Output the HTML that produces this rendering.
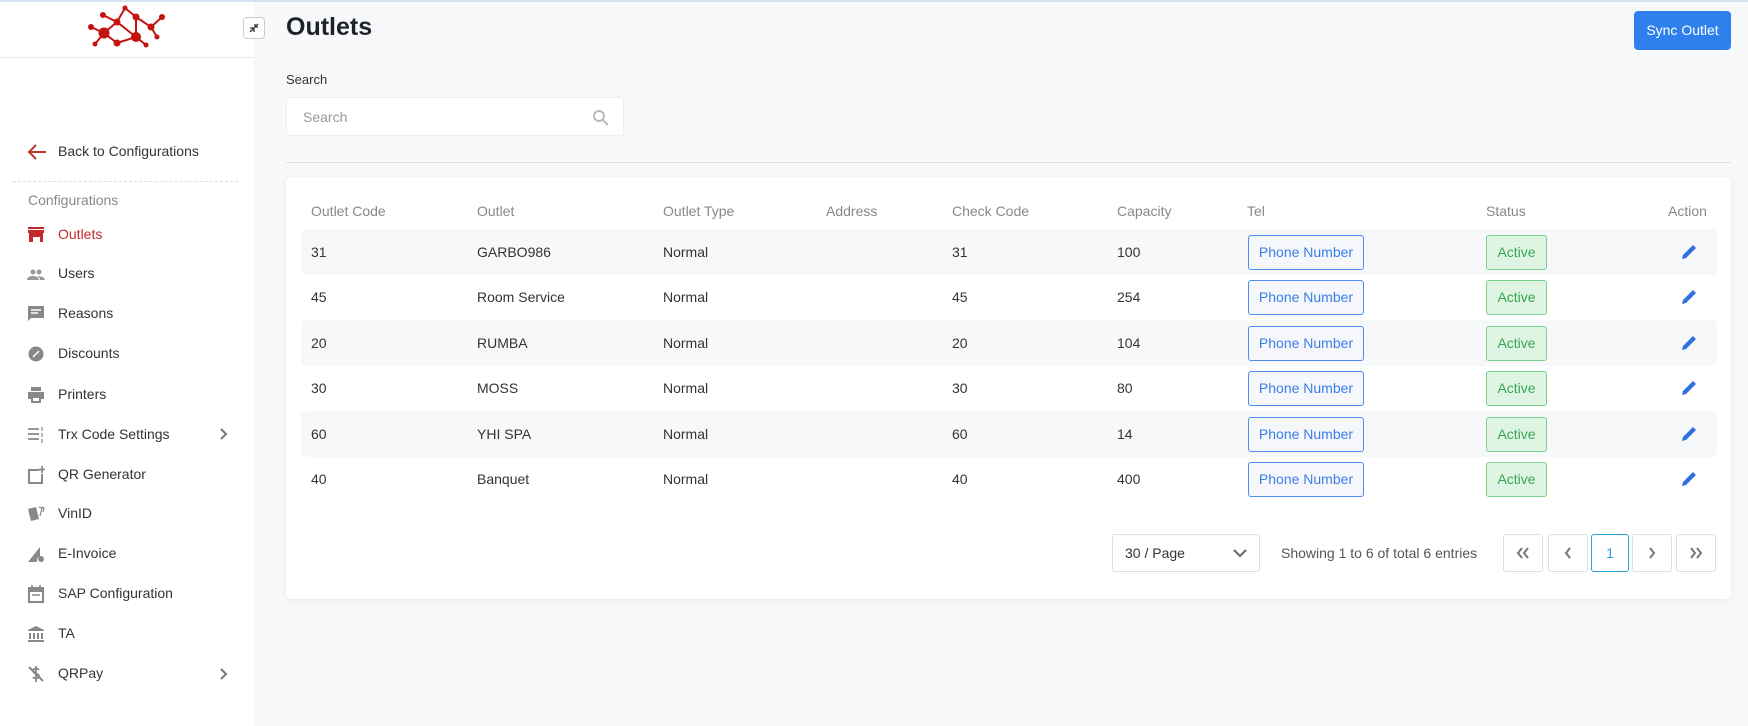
<!DOCTYPE html>
<html><head><meta charset="utf-8"><style>
*{box-sizing:border-box;margin:0;padding:0}
body{width:1748px;height:726px;overflow:hidden;background:#f7f8fa;font-family:"Liberation Sans",sans-serif;color:#333;position:relative}
.topline{position:absolute;left:0;top:0;width:1748px;height:2px;background:#d6e0ee;z-index:5}
.sb{position:absolute;left:0;top:0;width:254px;height:726px;background:#fff}
.sbh{position:absolute;left:0;top:0;width:254px;height:58px;border-bottom:1px solid #e6e8eb}
.col{position:absolute;left:243px;top:17px;width:22px;height:22px;border:1px solid #ccc;border-radius:4px;background:#fff}
.back{position:absolute;left:58px;top:143px;font-size:14px;color:#333}
.dash{position:absolute;left:13px;top:181px;width:225px;border-top:1px dashed #ddd}
.cfg{position:absolute;left:28px;top:192px;font-size:14px;color:#888}
.it{position:absolute;left:58px;font-size:14px;color:#333}
.ic{position:absolute;left:27px;width:18px;height:18px}
.chev{position:absolute;left:218px;width:12px;height:12px}
.t{position:absolute;white-space:nowrap}
.title{left:286px;top:13px;font-size:25px;font-weight:bold;color:#1f2329}
.sync{position:absolute;left:1634px;top:11px;width:97px;height:39px;background:#2f80ed;border-radius:4px;color:#fff;font-size:14px;text-align:center;line-height:39px}
.search{position:absolute;left:286px;top:97px;width:338px;height:39px;background:#fff;border:1px solid #eceef1;border-radius:4px;font-size:14px;color:#999;padding:11px 16px}
.hr{position:absolute;left:286px;top:162px;width:1445px;border-top:1px solid #dcdfe3}
.card{position:absolute;left:286px;top:177px;width:1445px;height:422px;background:#fff;border-radius:5px;box-shadow:0 2px 8px rgba(0,0,0,.06)}
.row{position:absolute;left:301px;width:1416px;height:46px;border-radius:5px}
.sh{background:#f7f8fa}
.c{position:absolute;font-size:14px;color:#333;white-space:nowrap}
.h{position:absolute;font-size:14px;color:#888;top:203px}
.ph{position:absolute;left:1248px;width:116px;height:35px;border:1px solid #4d8ef0;border-radius:3px;background:#f5f7fb;color:#3b7ee8;font-size:14px;text-align:center;line-height:33px}
.ac{position:absolute;left:1486px;width:61px;height:35px;border:1px solid #7bd08c;border-radius:3px;background:#dff5e3;color:#3aa551;font-size:14px;text-align:center;line-height:33px}
.pb{position:absolute;top:534px;width:40px;height:38px;border:1px solid #dcdfe3;border-radius:3px;background:#fff;color:#666;text-align:center;line-height:36px;font-size:14px}
.pb svg{position:absolute;left:12px;top:12px}
</style></head><body>
<div class="topline"></div>
<div class="sb">
<div class="sbh">
<svg style="position:absolute;left:80px;top:0" width="100" height="58" viewBox="80 0 100 58"><g stroke="#c4140f" stroke-width="2" fill="none"><path d="M103 15L117 22M91 27L104 33L117 22M104 33L95 44M104 33L117 43L136 37L146 45M117 22L125 8L136 17L136 37M117 22L136 37M136 17L151 27L162 17M151 27L157 37"/></g><g fill="#c4140f"><circle cx="103" cy="15" r="3"/><circle cx="91" cy="27" r="3"/><circle cx="104" cy="33" r="5.5"/><circle cx="95" cy="44" r="2.5"/><circle cx="117" cy="43" r="3.5"/><circle cx="117" cy="22" r="3.5"/><circle cx="125" cy="8" r="2.5"/><circle cx="136" cy="17" r="3.5"/><circle cx="136" cy="37" r="5"/><circle cx="146" cy="45" r="2.5"/><circle cx="151" cy="27" r="3.5"/><circle cx="162" cy="17" r="3"/><circle cx="157" cy="37" r="2.5"/></g></svg>
<div class="col"><svg width="20" height="20" viewBox="0 0 20 20"><path d="M6 14l4-4M6 10h4v4M14 6l-3 3M11 6v3h3" stroke="#333" stroke-width="1.3" fill="none"/></svg></div>
</div>
<svg style="position:absolute;left:27px;top:143px" width="20" height="18" viewBox="0 0 20 18"><path d="M19 9H3M9 2L2 9l7 7" stroke="#c0392b" stroke-width="2" fill="none"/></svg>
<div class="back">Back to Configurations</div>
<div class="dash"></div>
<div class="cfg">Configurations</div>
<svg class="ic" style="top:225px" viewBox="0 0 18 18"><path d="M1 2h16v2H1zM1 5h16v3H1zM2 8h14v9h-3v-5H6v5H2z" fill="#c4282b"/></svg><div class="it" style="top:226px;color:#c4282b">Outlets</div>
<svg class="ic" style="top:265px" viewBox="0 0 18 18"><circle cx="6" cy="7" r="2.5" fill="#999"/><circle cx="12" cy="7" r="2.5" fill="#999"/><path d="M0 15c0-3 3-4 6-4s6 1 6 4zM10 11c3 0 8 1 8 4h-5c0-2-1-3-3-4z" fill="#999"/></svg><div class="it" style="top:265px">Users</div>
<svg class="ic" style="top:305px" viewBox="0 0 18 18"><path d="M1 1h16v12H4l-3 3z" fill="#888"/><path d="M4 5h10M4 8h7" stroke="#fff" stroke-width="1.5"/></svg><div class="it" style="top:305px">Reasons</div>
<svg class="ic" style="top:345px" viewBox="0 0 18 18"><circle cx="9" cy="9" r="7.5" fill="#888"/><path d="M6 12l6-6" stroke="#fff" stroke-width="1.4"/></svg><div class="it" style="top:345px">Discounts</div>
<svg class="ic" style="top:386px" viewBox="0 0 18 18"><path d="M4 1h10v4H4zM1 6h16v7h-3v4H4v-4H1z" fill="#888"/><path d="M6 12h6v3H6z" fill="#fff"/></svg><div class="it" style="top:386px">Printers</div>
<svg class="ic" style="top:426px" viewBox="0 0 18 18"><path d="M1 3h11M1 8h11M1 13h11" stroke="#888" stroke-width="1.8"/><path d="M15 1v4M15 7v4M15 13v4" stroke="#888" stroke-width="1.2"/></svg><div class="it" style="top:426px">Trx Code Settings</div>
<svg class="chev" style="top:428px" viewBox="0 0 12 12"><path d="M3 1l5 5-5 5" stroke="#777" stroke-width="2" fill="none"/></svg>
<svg class="ic" style="top:466px" viewBox="0 0 18 18"><path d="M12 4H2v13h13V8" stroke="#888" stroke-width="2" fill="none"/><path d="M15 0v7M11.5 3.5h7" stroke="#888" stroke-width="1.8"/></svg><div class="it" style="top:466px">QR Generator</div>
<svg class="ic" style="top:505px" viewBox="0 0 18 18"><path d="M1 4l8-2 3 12-8 2z" fill="#888"/><path d="M12 2l3 1-2 8M15 2l2 1-1 4" stroke="#888" stroke-width="1.2" fill="none"/></svg><div class="it" style="top:505px">VinID</div>
<svg class="ic" style="top:545px" viewBox="0 0 18 18"><path d="M1 17L13 2v9a5 5 0 0 0-3 6z" fill="#888"/><circle cx="14" cy="14" r="3" fill="#888"/></svg><div class="it" style="top:545px">E-Invoice</div>
<svg class="ic" style="top:585px" viewBox="0 0 18 18"><path d="M2 3h14v14H2z" stroke="#888" stroke-width="2" fill="none"/><path d="M2 3h14v4H2z" fill="#888"/><path d="M5 0v4M13 0v4M5 10h8" stroke="#888" stroke-width="1.6"/></svg><div class="it" style="top:585px">SAP Configuration</div>
<svg class="ic" style="top:625px" viewBox="0 0 18 18"><path d="M9 1l8 4v1H1V5z" fill="#888"/><path d="M3 8v6M7 8v6M11 8v6M15 8v6" stroke="#888" stroke-width="2"/><path d="M1 15h16v2H1z" fill="#888"/></svg><div class="it" style="top:625px">TA</div>
<svg class="ic" style="top:665px" viewBox="0 0 18 18"><path d="M9 1v16M12 5c-1-2-6-2-6 1s6 2 6 5-5 3-6 1" stroke="#888" stroke-width="1.8" fill="none"/><path d="M2 2l14 14" stroke="#888" stroke-width="2"/></svg><div class="it" style="top:665px">QRPay</div>
<svg class="chev" style="top:668px" viewBox="0 0 12 12"><path d="M3 1l5 5-5 5" stroke="#777" stroke-width="2" fill="none"/></svg>
</div>

<div class="t title">Outlets</div>
<div class="sync">Sync Outlet</div>
<div class="t" style="left:286px;top:72px;font-size:13px;color:#333">Search</div>
<div class="search">Search<svg style="position:absolute;right:14px;top:11px" width="17" height="17" viewBox="0 0 17 17"><circle cx="7" cy="7" r="5" stroke="#bbb" stroke-width="2" fill="none"/><path d="M11 11l5 5" stroke="#bbb" stroke-width="2"/></svg></div>
<div class="hr"></div>
<div class="card"></div>
<div class="h" style="left:311px">Outlet Code</div>
<div class="h" style="left:477px">Outlet</div>
<div class="h" style="left:663px">Outlet Type</div>
<div class="h" style="left:826px">Address</div>
<div class="h" style="left:952px">Check Code</div>
<div class="h" style="left:1117px">Capacity</div>
<div class="h" style="left:1247px">Tel</div>
<div class="h" style="left:1486px">Status</div>
<div class="h" style="left:1668px">Action</div>

<div class="row sh" style="top:229px"></div>
<div class="row sh" style="top:320px"></div>
<div class="row sh" style="top:411px"></div>

<div class="c" style="left:311px;top:244px">31</div><div class="c" style="left:477px;top:244px">GARBO986</div><div class="c" style="left:663px;top:244px">Normal</div><div class="c" style="left:952px;top:244px">31</div><div class="c" style="left:1117px;top:244px">100</div><div class="ph" style="top:235px">Phone Number</div><div class="ac" style="top:235px">Active</div>
<div class="c" style="left:311px;top:289px">45</div><div class="c" style="left:477px;top:289px">Room Service</div><div class="c" style="left:663px;top:289px">Normal</div><div class="c" style="left:952px;top:289px">45</div><div class="c" style="left:1117px;top:289px">254</div><div class="ph" style="top:280px">Phone Number</div><div class="ac" style="top:280px">Active</div>
<div class="c" style="left:311px;top:335px">20</div><div class="c" style="left:477px;top:335px">RUMBA</div><div class="c" style="left:663px;top:335px">Normal</div><div class="c" style="left:952px;top:335px">20</div><div class="c" style="left:1117px;top:335px">104</div><div class="ph" style="top:326px">Phone Number</div><div class="ac" style="top:326px">Active</div>
<div class="c" style="left:311px;top:380px">30</div><div class="c" style="left:477px;top:380px">MOSS</div><div class="c" style="left:663px;top:380px">Normal</div><div class="c" style="left:952px;top:380px">30</div><div class="c" style="left:1117px;top:380px">80</div><div class="ph" style="top:371px">Phone Number</div><div class="ac" style="top:371px">Active</div>
<div class="c" style="left:311px;top:426px">60</div><div class="c" style="left:477px;top:426px">YHI SPA</div><div class="c" style="left:663px;top:426px">Normal</div><div class="c" style="left:952px;top:426px">60</div><div class="c" style="left:1117px;top:426px">14</div><div class="ph" style="top:417px">Phone Number</div><div class="ac" style="top:417px">Active</div>
<div class="c" style="left:311px;top:471px">40</div><div class="c" style="left:477px;top:471px">Banquet</div><div class="c" style="left:663px;top:471px">Normal</div><div class="c" style="left:952px;top:471px">40</div><div class="c" style="left:1117px;top:471px">400</div><div class="ph" style="top:462px">Phone Number</div><div class="ac" style="top:462px">Active</div>

<svg style="position:absolute;left:1680px;top:243px" width="18" height="18" viewBox="0 0 18 18"><path d="M2 16l1-4L13 2l3 3L6 15z" fill="#2f6fe0"/></svg>
<svg style="position:absolute;left:1680px;top:288px" width="18" height="18" viewBox="0 0 18 18"><path d="M2 16l1-4L13 2l3 3L6 15z" fill="#2f6fe0"/></svg>
<svg style="position:absolute;left:1680px;top:334px" width="18" height="18" viewBox="0 0 18 18"><path d="M2 16l1-4L13 2l3 3L6 15z" fill="#2f6fe0"/></svg>
<svg style="position:absolute;left:1680px;top:379px" width="18" height="18" viewBox="0 0 18 18"><path d="M2 16l1-4L13 2l3 3L6 15z" fill="#2f6fe0"/></svg>
<svg style="position:absolute;left:1680px;top:425px" width="18" height="18" viewBox="0 0 18 18"><path d="M2 16l1-4L13 2l3 3L6 15z" fill="#2f6fe0"/></svg>
<svg style="position:absolute;left:1680px;top:470px" width="18" height="18" viewBox="0 0 18 18"><path d="M2 16l1-4L13 2l3 3L6 15z" fill="#2f6fe0"/></svg>

<div style="position:absolute;left:1112px;top:534px;width:148px;height:38px;border:1px solid #dcdfe3;border-radius:3px;background:#fff;font-size:14px;padding:10px 12px">30 / Page<svg style="position:absolute;right:12px;top:13px" width="14" height="10" viewBox="0 0 14 10"><path d="M1 2l6 6 6-6" stroke="#666" stroke-width="2" fill="none"/></svg></div>
<div class="t" style="left:1281px;top:545px;font-size:14px;color:#555">Showing 1 to 6 of total 6 entries</div>
<div class="pb" style="left:1503px"><svg width="14" height="12" viewBox="0 0 14 12"><path d="M6 1L2 6l4 5M12 1L8 6l4 5" stroke="#777" stroke-width="2" fill="none"/></svg></div>
<div class="pb" style="left:1548px"><svg width="14" height="12" viewBox="0 0 14 12"><path d="M9 1L5 6l4 5" stroke="#777" stroke-width="2" fill="none"/></svg></div>
<div class="pb" style="left:1591px;width:38px;border-color:#2aa3d6;color:#2aa3d6">1</div>
<div class="pb" style="left:1632px"><svg width="14" height="12" viewBox="0 0 14 12"><path d="M5 1l4 5-4 5" stroke="#777" stroke-width="2" fill="none"/></svg></div>
<div class="pb" style="left:1676px"><svg width="14" height="12" viewBox="0 0 14 12"><path d="M2 1l4 5-4 5M8 1l4 5-4 5" stroke="#777" stroke-width="2" fill="none"/></svg></div>
</body></html>
